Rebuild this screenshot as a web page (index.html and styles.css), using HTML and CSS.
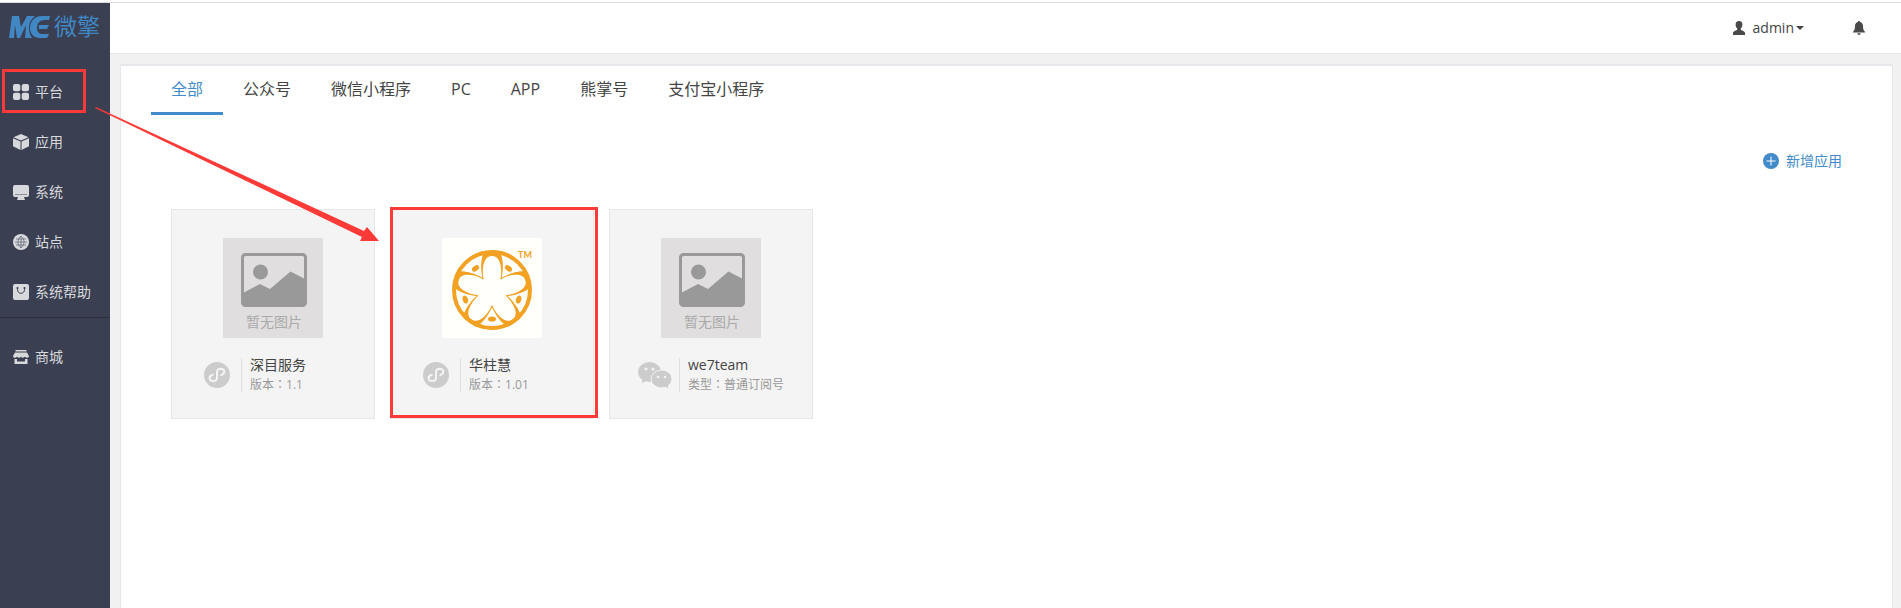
FILE: index.html
```html
<!DOCTYPE html>
<html lang="zh-CN">
<head>
<meta charset="utf-8">
<title>微擎</title>
<link rel="stylesheet" href="styles.css">
</head>
<body>
<svg class="defs" width="0" height="0" aria-hidden="true">
  <symbol id="picture" viewBox="0 0 66 54">
    <rect x="1.500" y="1.500" width="63" height="51" rx="3" fill="none" stroke="#999" stroke-width="3"/>
    <circle cx="19.500" cy="19" r="7.500" fill="#999"/>
    <path d="M2 40l17-9 10 5 20.500-17.500L64 26v26H2z" fill="#999"/>
  </symbol>
  <symbol id="mini-program" viewBox="0 0 26 26">
    <circle cx="13" cy="13" r="13" fill="#ccc"/>
    <path d="M8.800 12.800c-2.400.6-3.400 2-3.200 3.700.2 1.600 1.800 2.700 3.600 2.600 2.200-.1 3.800-1.500 3.800-3.400V10c0-1.900 1.600-3.200 3.700-3.300 1.900 0 3.500 1.100 3.600 2.700.1 1.700-.9 3-3.100 3.700" fill="none" stroke="#f4f4f4" stroke-width="2" stroke-linecap="round"/>
  </symbol>
  <symbol id="petal" viewBox="0 0 100 100">
    <path d="M41 41C39 30 39 21 42 14H58C61 21 61 30 59 41 60 28 58 18 50 18S40 28 41 41z" fill="#f2a122"/>
    <path d="M41 41C39 30 39 21 43 15M59 41C61 30 61 21 57 15" fill="none" stroke="#f2a122"/>
    <ellipse cx="50" cy="81" rx="4" ry="2.600" fill="#f2a122"/>
  </symbol>
</svg>
<header class="topbar">
  <button class="user" type="button">
    <svg width="12" height="14" viewBox="0 0 12 14" aria-hidden="true"><path d="M6 0c2.300 0 3.400 1.500 3.400 3.500 0 1.800-.7 3.200-1.600 4.100v1.200c.4.9 4.200 1.200 4.200 3V14H0v-2.200c0-1.800 3.800-2.100 4.200-3V7.600C3.300 6.700 2.600 5.300 2.600 3.500 2.600 1.500 3.700 0 6 0z" fill="#4a4a4a"/></svg>
    <span>admin</span><i class="caret"></i>
  </button>
  <button class="bell" type="button" aria-label="消息">
    <svg width="12" height="14" viewBox="0 0 12 14" aria-hidden="true"><path d="M6 0c.7 0 1.100.5 1.100 1.100C9 1.600 10 3.100 10 5c0 3.500.8 4.800 2 5.800v.8H0v-.8C1.200 9.800 2 8.500 2 5c0-1.900 1-3.400 2.900-3.900C4.900.5 5.300 0 6 0zM4.300 12.300h3.400C7.500 13.300 6.900 14 6 14s-1.500-.7-1.700-1.700z" fill="#4a4a4a"/></svg>
  </button>
</header>
<nav class="sidebar">
  <a class="logo" href="#">
    <svg width="42" height="22" viewBox="0 0 42 22" aria-hidden="true">
      <path d="M3 0h7l2 11L18 0h8c-4 3-6 7-6 12 0 4 1 7 3 10h-7l1-13-6 13H8L6 9 5 22H0z" fill="#4187c4"/>
      <path d="M41 0H33C25 0 21 6 21 12c0 6 4 10 10 10h7l2-4h-6c-4 0-6-2-6-6 0-5 3-8 8-8h4zM30 9h10l-2 4h-8z" fill="#4187c4"/>
    </svg>
    <span>微擎</span>
  </a>
  <ul class="menu">
    <li><a href="#"><svg width="16" height="16" viewBox="0 0 16 16" aria-hidden="true"><g fill="#d8d9dd"><rect width="7.300" height="7.300" rx="2"/><rect x="8.700" width="7.300" height="7.300" rx="2"/><rect y="8.700" width="7.300" height="7.300" rx="2"/><rect x="8.700" y="8.700" width="7.300" height="7.300" rx="2"/></g></svg>平台</a></li>
    <li><a href="#"><svg width="16" height="16" viewBox="0 0 16 16" aria-hidden="true"><path d="M8 0l7.500 3.200L8 6.500.5 3.200zM0 4.300l7.500 3.300V16L0 12.300zM16 4.300L8.500 7.600V16l7.500-3.700z" fill="#d8d9dd"/></svg>应用</a></li>
    <li><a href="#"><svg width="16" height="16" viewBox="0 0 16 16" aria-hidden="true"><path d="M2 1h12a2 2 0 0 1 2 2v8a2 2 0 0 1-2 2h-3l1 3H4l1-3H2a2 2 0 0 1-2-2V3a2 2 0 0 1 2-2z" fill="#d8d9dd"/><path d="M2 10.500h12" stroke="#8d909b"/></svg>系统</a></li>
    <li><a href="#"><svg width="16" height="16" viewBox="0 0 16 16" aria-hidden="true"><circle cx="8" cy="8" r="8" fill="#d8d9dd"/><path d="M8 2v12M2 8h12M3 5h10M3 11h10M8 2C4 5 4 11 8 14M8 2c4 3 4 9 0 12" fill="none" stroke="#676b79" stroke-width=".8"/></svg>站点</a></li>
    <li><a href="#"><svg width="16" height="16" viewBox="0 0 16 16" aria-hidden="true"><rect width="16" height="16" rx="2" fill="#d8d9dd"/><path d="M4.500 4v1.500C4.500 8 6 9.300 8 9.300s3.500-1.300 3.500-3.800V4" fill="none" stroke="#3a3f51"/><circle cx="4.500" cy="4" r="1.100" fill="#3a3f51"/><circle cx="11.500" cy="4" r="1.100" fill="#3a3f51"/></svg>系统帮助</a></li>
  </ul>
  <ul class="menu menu-extra">
    <li><a href="#"><svg width="16" height="16" viewBox="0 0 16 16" aria-hidden="true"><path d="M2.500 1h11v1.500h-11zM2 3.500h12L16 7c0 2-2.500 2.500-4 .8C10.500 9.300 9 9 8 7.800 7 9 5.500 9.300 4 7.800 2.500 9.500 0 9 0 7zM1.500 10H4v2.500h8V10h2.500v5h-13z" fill="#d8d9dd"/></svg>商城</a></li>
  </ul>
</nav>
<main class="panel">
  <nav class="tabs">
    <a class="active" href="#">全部</a><a href="#">公众号</a><a href="#">微信小程序</a><a href="#">PC</a><a href="#">APP</a><a href="#">熊掌号</a><a href="#">支付宝小程序</a>
  </nav>
  <div class="actions">
    <a class="add" href="#"><svg width="16" height="16" viewBox="0 0 16 16" aria-hidden="true"><circle cx="8" cy="8" r="8" fill="#428bca"/><path d="M8 3.500v9M3.500 8h9" stroke="#fff"/></svg>新增应用</a>
  </div>
  <div class="cards">
    <article class="card">
      <div class="cover no-image"><svg width="66" height="54" aria-hidden="true"><use href="#picture"/></svg><span>暂无图片</span></div>
      <div class="info">
        <svg class="type" aria-hidden="true"><use href="#mini-program"/></svg>
        <div class="meta"><h3>深目服务</h3><p>版本<span class="colon" lang="zh-TW">：</span>1.1</p></div>
      </div>
    </article>
    <article class="card">
      <svg class="cover" viewBox="0 0 100 100" role="img" aria-label="华柱慧">
        <rect width="100" height="100" fill="#fffffc"/>
        <g>
          <use href="#petal" width="100" height="100"/>
          <use href="#petal" width="100" height="100" transform="rotate(72 50 53)"/>
          <use href="#petal" width="100" height="100" transform="rotate(144 50 53)"/>
          <use href="#petal" width="100" height="100" transform="rotate(216 50 53)"/>
          <use href="#petal" width="100" height="100" transform="rotate(288 50 53)"/>
        </g>
        <circle cx="50" cy="52" r="43" fill="none" stroke="#fffffc" stroke-width="6"/>
        <circle cx="50" cy="52" r="38" fill="none" stroke="#f2a122" stroke-width="4"/>
        <text x="76" y="20" class="tm">TM</text>
      </svg>
      <div class="info">
        <svg class="type" aria-hidden="true"><use href="#mini-program"/></svg>
        <div class="meta"><h3>华柱慧</h3><p>版本<span class="colon" lang="zh-TW">：</span>1.01</p></div>
      </div>
    </article>
    <article class="card">
      <div class="cover no-image"><svg width="66" height="54" aria-hidden="true"><use href="#picture"/></svg><span>暂无图片</span></div>
      <div class="info">
        <svg class="type wechat" viewBox="0 0 34 26" aria-hidden="true"><ellipse cx="11.500" cy="10" rx="11.500" ry="10" fill="#ccc"/><path d="M4 16v5l6-3z" fill="#ccc"/><ellipse cx="23.500" cy="17" rx="10.500" ry="9" fill="#ccc" stroke="#f4f4f4"/><path d="M26 24l4 2v-4z" fill="#ccc"/><g fill="#f4f4f4"><circle cx="8" cy="7" r="1.500"/><circle cx="15" cy="7" r="1.500"/><circle cx="20" cy="15" r="1.300"/><circle cx="27" cy="15" r="1.300"/></g></svg>
        <div class="meta"><h3>we7team</h3><p>类型<span class="colon" lang="zh-TW">：</span>普通订阅号</p></div>
      </div>
    </article>
  </div>
</main>
<div class="mark mark-menu"></div>
<div class="mark mark-card"></div>
<svg class="arrow" width="285" height="136" viewBox="0 0 285 136" aria-hidden="true"><path d="M0 1L1 0L269 124 272 120 284 134H265L267 130z" fill="#fc3a38"/></svg>
</body>
</html>
```
FILE: styles.css
```css
* { box-sizing: border-box; }
body {
  margin: 0;
  min-height: 100vh;
  display: grid;
  grid-template: auto 1fr / 110px 1fr;
  border-top: 2px solid #fff;
  background: #f1f1f1;
  color: #444;
  font: 14px/20px "Open Sans", "Noto Sans CJK SC", sans-serif;
}
a { color: inherit; text-decoration: none; }
ul, h3, p { margin: 0; padding: 0; list-style: none; font-weight: 400; }
button { border: 0; padding: 0; background: none; font: inherit; color: inherit; }
svg { display: block; flex: none; }
.defs { position: absolute; }
.topbar {
  grid-area: 1 / 1 / 2 / 3;
  height: 52px;
  padding-right: 36px;
  display: flex;
  align-items: center;
  justify-content: flex-end;
  gap: 49px;
  background: #fff;
  border-top: 1px solid #dadce0;
  border-bottom: 1px solid #e7e7eb;
}
.user { display: flex; align-items: center; }
.user span { margin-left: 8px; }
.caret { margin-left: 2px; border: 4px solid transparent; border-top-color: #444; border-bottom: 0; }
.sidebar {
  grid-area: 1 / 1 / 3 / 2;
  margin-top: 1px;
  background: #3a3f51;
  color: #d8d9dd;
}
.logo {
  height: 64px;
  padding: 8px 0 0 9px;
  display: flex;
  gap: 3px;
  color: #4187c4;
  font-size: 23px;
  line-height: 30px;
}
.logo svg { margin-top: 5px; }
.menu a { height: 50px; padding: 0 0 1px 13px; display: flex; align-items: center; gap: 6px; }
.menu-extra { border-top: 1px solid #2c303d; padding-top: 14px; }
.panel {
  margin: 10px 8px 0 10px;
  grid-area: 2 / 2;
  border: 1px solid #e7e7eb;
  border-top-width: 2px;
  border-bottom: 0;
  background: #fff;
}
.tabs { display: flex; padding-left: 30px; font-size: 16px; }
.tabs a { height: 49px; padding: 11px 20px 0; line-height: 24px; border-bottom: 3px solid transparent; }
.tabs .active { color: #428bca; border-color: #428bca; }
.actions { display: flex; justify-content: flex-end; padding: 36px 50px 0 0; }
.add { display: flex; align-items: center; gap: 7px; color: #428bca; }
.cards { display: flex; flex-wrap: wrap; gap: 15px; padding: 38px 50px; }
.card { width: 204px; height: 210px; padding-top: 28px; border: 1px solid #e7e7eb; background: #f4f4f4; }
.cover { width: 100px; height: 100px; margin: 0 auto; }
.no-image {
  padding: 15px 0 0 2px;
  display: flex;
  flex-direction: column;
  align-items: center;
  background: #e0dede;
  color: #aaa;
  line-height: 30px;
}
.tm { font: 700 9px Lato, sans-serif; fill: #f2a122; }
.info { display: flex; align-items: center; margin-top: 20px; }
.type { width: 26px; height: 26px; margin: 0 11px 0 32px; }
.wechat { width: 34px; margin: 0 7px 0 28px; }
.meta { padding-left: 8px; border-left: 1px solid #e0e0e0; height: 34px; }
.meta h3 { font-size: 14px; line-height: 14px; }
.meta p { margin-top: 4px; font-size: 12px; line-height: 16px; color: #999; }
.colon { font-family: "Noto Sans CJK TC", sans-serif; }
.mark { position: absolute; border: 3px solid #fc3a38; }
.mark-menu { left: 2px; top: 69px; width: 84px; height: 44px; }
.mark-card { left: 390px; top: 207px; width: 208px; height: 211px; }
.arrow { position: absolute; left: 95px; top: 107px; }
```
